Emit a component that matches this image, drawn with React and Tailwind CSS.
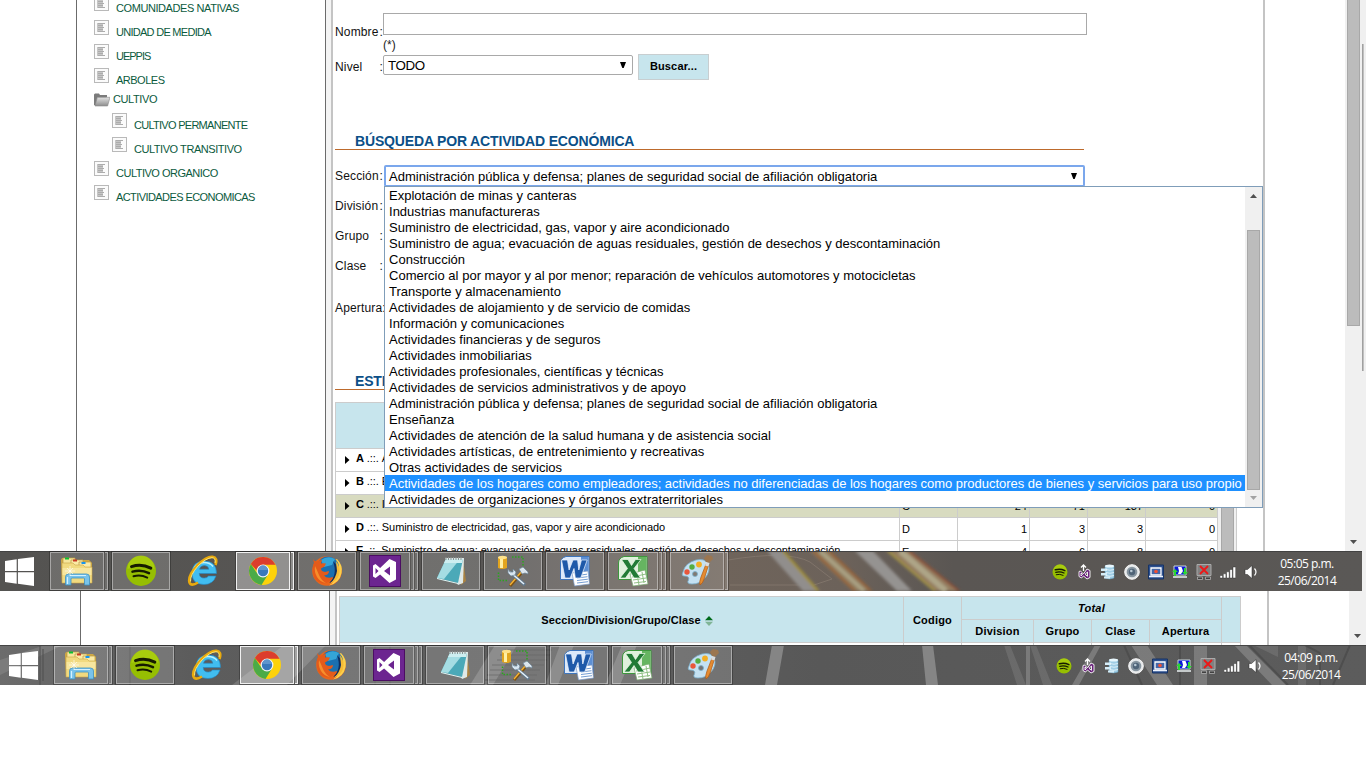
import React from "react";

const SIDEBAR_TOP = [
  ["COMUNIDADES NATIVAS", "tracking-[-0.42px]"],
  ["UNIDAD DE MEDIDA", "tracking-[-0.72px]"],
  ["UEPPIS", "tracking-[-1px]"],
  ["ARBOLES", "tracking-[-0.5px]"],
];
const SIDEBAR_CHILDREN = [
  ["CULTIVO PERMANENTE", "tracking-[-0.72px]"],
  ["CULTIVO TRANSITIVO", "tracking-[-0.45px]"],
];
const SIDEBAR_BOTTOM = [
  ["CULTIVO ORGANICO", "tracking-[-0.5px]"],
  ["ACTIVIDADES ECONOMICAS", "tracking-[-0.58px]"],
];

const OPTIONS = [
  "Explotación de minas y canteras",
  "Industrias manufactureras",
  "Suministro de electricidad, gas, vapor y aire acondicionado",
  "Suministro de agua; evacuación de aguas residuales, gestión de desechos y descontaminación",
  "Construcción",
  "Comercio al por mayor y al por menor; reparación de vehículos automotores y motocicletas",
  "Transporte y almacenamiento",
  "Actividades de alojamiento y de servicio de comidas",
  "Información y comunicaciones",
  "Actividades financieras y de seguros",
  "Actividades inmobiliarias",
  "Actividades profesionales, científicas y técnicas",
  "Actividades de servicios administrativos y de apoyo",
  "Administración pública y defensa; planes de seguridad social de afiliación obligatoria",
  "Enseñanza",
  "Actividades de atención de la salud humana y de asistencia social",
  "Actividades artísticas, de entretenimiento y recreativas",
  "Otras actividades de servicios",
  "Actividades de los hogares como empleadores; actividades no diferenciadas de los hogares como productores de bienes y servicios para uso propio",
  "Actividades de organizaciones y órganos extraterritoriales",
];

const ROWS = [
  { k: "A", name: "Agricultura, ganadería", v: ["3", "13", "38", "0"] },
  { k: "B", name: "Explotación de minas", v: ["5", "10", "14", "0"] },
  { k: "C", name: "Industrias manufactureras", v: ["24", "71", "137", "0"] },
  { k: "D", name: "Suministro de electricidad, gas, vapor y aire acondicionado", v: ["1", "3", "3", "0"] },
  { k: "E", name: "Suministro de agua; evacuación de aguas residuales, gestión de desechos y descontaminación", v: ["4", "6", "8", "0"] },
];

function DocIcon() {
  return (
    <svg className="mt-[3px] h-[15px] w-[15px] shrink-0" viewBox="0 0 15 15">
      <rect x="0.5" y="0.5" width="14" height="14" fill="#fbfbfb" stroke="#b9b9b9" />
      <rect x="3" y="3" width="6" height="9" fill="#c6c6c6" />
      <path d="M4 3.500h7M4 5.500h5M4 7.500h6M4 9.500h5M4 11.500h7" stroke="#acacac" strokeWidth="1" />
    </svg>
  );
}

function TreeItem({ label, track, nested }) {
  return (
    <div className={nested ? "flex h-6 pl-[35px]" : "flex h-6 pl-[17px]"}>
      <DocIcon />
      <span className={`ml-[7px] pt-[7px] text-[11px] leading-4 whitespace-nowrap text-[#0b5a3d] ${track}`}>{label}</span>
    </div>
  );
}

function Sidebar() {
  return (
    <div className="-mt-[7px] w-[250px] shrink-0 border-x border-[#6b6b6b]">
      {SIDEBAR_TOP.map(([l, t]) => <TreeItem key={l} label={l} track={t} />)}
      <div className="flex h-[21px] items-center pl-[17px]">
        <svg className="h-[14px] w-[16px]" viewBox="0 0 16 14">
          <defs>
            <linearGradient id="fold" x1="0" y1="0" x2="0" y2="1">
              <stop offset="0" stopColor="#e2e2e2" />
              <stop offset="1" stopColor="#8d8d8d" />
            </linearGradient>
          </defs>
          <path d="M0 12V1.500L1 .5h4l1 1.500h7v2L3 13z" fill="#7b7b7b" />
          <path d="M1 13L3.300 4.300H16L13.600 13z" fill="url(#fold)" stroke="#8a8a8a" strokeWidth=".6" />
        </svg>
        <span className="-mt-[2px] ml-[3px] text-[11px] leading-4 tracking-[-0.4px] text-[#0b5a3d]">CULTIVO</span>
      </div>
      {SIDEBAR_CHILDREN.map(([l, t]) => <TreeItem key={l} label={l} track={t} nested />)}
      {SIDEBAR_BOTTOM.map(([l, t]) => <TreeItem key={l} label={l} track={t} />)}
    </div>
  );
}

function Label({ children }) {
  return (
    <div className="flex h-4 w-[48px] shrink-0 justify-between text-[12px] leading-4 tracking-[0.15px] whitespace-nowrap text-[#111]">
      <span>{children}</span>
      <span>:</span>
    </div>
  );
}

function DownArrow() {
  return (
    <svg className="mr-px h-[6px] w-[6px] shrink-0" viewBox="0 0 6 6">
      <path d="M0 0h6L3.700 6H2.300z" fill="#000" />
    </svg>
  );
}

function Heading({ children }) {
  return (
    <div className="h-[17px] w-[749px] border-b border-[#bd6a2c] pl-[20px] text-[14px] leading-4 font-bold tracking-[-0.16px] whitespace-nowrap text-[#0b4f87]">
      {children}
    </div>
  );
}

function Dropdown() {
  return (
    <div className="absolute top-[186px] left-[384px] z-10 flex h-[322px] w-[879px] border border-[#7f9db9] bg-white">
      <div className="w-[860px] shrink-0">
        {OPTIONS.map((o, i) => (
          <div
            key={o}
            className={
              i === 18
                ? "h-4 bg-[#1e90ff] pl-1 text-[13px] leading-[17px] tracking-[-0.02px] whitespace-nowrap text-white"
                : "h-4 pl-1 text-[13px] leading-[17px] tracking-[0.015px] whitespace-nowrap text-black"
            }
          >
            {o}
          </div>
        ))}
      </div>
      <div className="flex w-[17px] shrink-0 flex-col items-center bg-[#f0f0f0]">
        <svg className="mt-[7px] h-1 w-[7px]" viewBox="0 0 7 4"><path d="M3.500 0L7 4H0z" fill="#505050" /></svg>
        <div className="mt-8 h-[260px] w-[13px] border border-[#a8a8a8] bg-[#bcbcbc]" />
        <svg className="mt-[6px] h-1 w-[7px]" viewBox="0 0 7 4"><path d="M3.500 4L7 0H0z" fill="#a3a3a3" /></svg>
      </div>
    </div>
  );
}

function TopTable() {
  return (
    <div className="flex h-[149px] w-[902px] border-t border-l border-[#ccc]">
      <div className="w-[882px]">
        <div className="h-[46px] border-b border-[#ccc] bg-[#c7e5ed]" />
        {ROWS.map((r) => (
          <div
            key={r.k}
            className={
              r.k === "C"
                ? "flex h-[23px] border-b border-[#ccc] bg-[#d8dbc0] text-[11px] leading-[22px] text-black"
                : "flex h-[23px] border-b border-[#ccc] bg-white text-[11px] leading-[22px] text-black"
            }
          >
            <div className="flex w-[564px] items-center border-r border-[#ccc] pl-[9px]">
              <svg className="h-2 w-[5px]" viewBox="0 0 5 8"><path d="M0 0l4.500 4L0 8z" /></svg>
              <span className="-mt-[4px] ml-[6px] tracking-[-0.07px] whitespace-nowrap"><b>{r.k}</b> .::.</span>
              <span className="-mt-[4px] ml-[3px] tracking-[-0.07px] whitespace-nowrap">{r.name}</span>
            </div>
            <div className="w-[58px] border-r border-[#ccc] pl-[2px]">{r.k}</div>
            <div className="w-[72px] border-r border-[#ccc] pr-[2px] text-right">{r.v[0]}</div>
            <div className="w-[58px] border-r border-[#ccc] pr-[2px] text-right">{r.v[1]}</div>
            <div className="w-[58px] border-r border-[#ccc] pr-[2px] text-right">{r.v[2]}</div>
            <div className="w-[72px] border-r border-[#ccc] pr-[2px] text-right">{r.v[3]}</div>
          </div>
        ))}
      </div>
      <div className="flex w-[19px] border-r border-[#ccc] bg-[#f0f0f0] pl-[3px]">
        <div className="mt-[46px] h-[102px] w-[13px] border-x border-[#a8a8a8] bg-[#bcbcbc]" />
      </div>
    </div>
  );
}

function TopWindow() {
  return (
    <div className="relative flex h-[551px] overflow-hidden bg-white pl-[76px]">
      <Sidebar />
      <div className="w-[5px] shrink-0 bg-[#f4f4f4]" />
      <div className="w-[934px] shrink-0 border-x-2 border-[#c4c4c4] pl-[2px]">
        <div className="flex h-[50px] pt-[13px]">
          <div className="pt-[11px]"><Label>Nombre</Label></div>
          <div>
            <div className="h-[22px] w-[704px] border border-[#a9a9a9] bg-white" />
            <div className="pt-[2px] text-[12px] leading-4 text-[#222]">(*)</div>
          </div>
        </div>
        <div className="flex h-[83px] pt-1">
          <div className="pt-[5px]"><Label>Nivel</Label></div>
          <div className="mt-px flex h-[20px] w-[250px] items-center justify-between rounded-[2px] border border-[#a9a9a9] pr-[5px] pl-1 text-[13.33px] tracking-[-0.4px]">
            <span className="pt-px">TODO</span>
            <DownArrow />
          </div>
          <div className="ml-[5px] h-[26px] w-[71px] border border-[#c8ced0] bg-[#c7e5ed] text-center text-[11px] leading-[23px] font-bold tracking-[0.15px]">Buscar...</div>
        </div>
        <Heading>BÚSQUEDA POR ACTIVIDAD ECONÓMICA</Heading>
        <div className="flex h-[48px] pt-[15px]">
          <div className="w-[49px] pt-[3px]"><Label>Sección</Label></div>
          <div className="flex h-[22px] w-[701px] items-center justify-between rounded-[2px] border-2 border-[#7ba7ec] pr-[5px] pl-[3px] text-[13px] tracking-[0.015px] whitespace-nowrap">
            <span className="pt-px">{OPTIONS[13]}</span>
            <DownArrow />
          </div>
        </div>
        <div className="flex h-[102px] flex-col gap-[14px]">
          <Label>División</Label>
          <Label>Grupo</Label>
          <Label>Clase</Label>
        </div>
        <div className="h-[73px]"><Label>Apertura</Label></div>
        <Heading>ESTRUCTURA</Heading>
        <div className="mt-3"><TopTable /></div>
      </div>
      <Dropdown />
      <div className="ml-20 flex w-[21px] bg-[#f0f0f0] pl-[2px]">
        <div className="flex w-[13px] flex-col items-center justify-between">
          <div className="h-[326px] w-[13px] border-x border-b border-[#a8a8a8] bg-[#bcbcbc]" />
          <svg className="mb-[7px] h-1 w-[7px]" viewBox="0 0 7 4"><path d="M3.500 4L7 0H0z" fill="#505050" /></svg>
        </div>
        <div className="mt-11 ml-[2px] h-[327px] w-[2px] border-l border-[#a0a0a0] bg-[#c0c0c0]" />
      </div>
    </div>
  );
}

function HeadCell({ children, wide }) {
  return (
    <div className={wide ? "w-[72px] border-r border-[#ccc] text-center" : "w-[58px] border-r border-[#ccc] text-center"}>{children}</div>
  );
}

function MiddleWindow() {
  return (
    <div className="flex h-[54px] overflow-hidden bg-white pl-20">
      <div className="w-[250px] border-x border-[#6b6b6b]" />
      <div className="w-[5px] bg-[#f4f4f4]" />
      <div className="w-[934px] border-x-2 border-[#c4c4c4] pt-[5px] pl-[2px]">
        <div className="flex h-[47px] w-[902px] border border-[#ccc] bg-[#c7e5ed] text-[11px] font-bold tracking-[0.2px] text-black">
          <div className="flex w-[564px] items-center justify-center border-r border-[#ccc] pt-[2px] pl-[11px] tracking-[0.1px]">
            <span>Seccion/Division/Grupo/Clase</span>
            <svg className="ml-1 h-[10px] w-2" viewBox="0 0 8 10">
              <path d="M4 0l4 4.300H0z" fill="#006b1b" />
              <path d="M4 10l4-4.300H0z" fill="#7fb496" />
            </svg>
          </div>
          <div className="flex w-[58px] items-center justify-center border-r border-[#ccc] pt-[2px]">Codigo</div>
          <div className="w-[260px]">
            <div className="h-[23px] border-r border-b border-[#ccc] text-center leading-[22px] italic">Total</div>
            <div className="flex h-[22px] leading-[23px]">
              <HeadCell wide>Division</HeadCell>
              <HeadCell>Grupo</HeadCell>
              <HeadCell>Clase</HeadCell>
              <HeadCell wide>Apertura</HeadCell>
            </div>
          </div>
        </div>
        <div className="flex h-[2px] w-[902px] border-x border-[#ccc]">
          <div className="w-[564px] border-r border-[#ccc]" />
          <div className="w-[58px] border-r border-[#ccc]" />
          <HeadCell wide />
          <HeadCell />
          <HeadCell />
          <HeadCell wide />
        </div>
      </div>
      <div className="ml-20 flex w-[17px] flex-col items-center justify-end bg-[#f0f0f0] pb-[7px]">
        <svg className="h-1 w-[7px]" viewBox="0 0 7 4"><path d="M3.500 4L7 0H0z" fill="#505050" /></svg>
      </div>
    </div>
  );
}

const I = "h-8 w-8 shrink-0";

function ExplorerIcon() {
  return (
    <svg className={I} viewBox="0 0 32 32">
      <path d="M0 5l1-2h9l2 2h16l3 3v20H1z" fill="#d0a945" />
      <path d="M2 3h12v6H2z" fill="#f6e69c" stroke="#b9983f" strokeWidth=".7" />
      <path d="M10 5h12v6H10z" fill="#fbeba6" stroke="#b9983f" strokeWidth=".7" />
      <path d="M18 7h12v6H18z" fill="#fbeba6" stroke="#b9983f" strokeWidth=".7" />
      <rect x="4" y="2.500" width="4" height="2" fill="#0bbf32" />
      <rect x="12" y="4.500" width="4" height="2" fill="#c93a24" />
      <rect x="20.500" y="7" width="4" height="2" fill="#1795ee" />
      <path d="M1 8h11l2 2h8l2 2h7v16H1z" fill="#f1da80" stroke="#c9a548" strokeWidth=".6" />
      <path d="M1.500 13h29v7h-29z" fill="#fbeeb4" opacity=".6" />
      <path d="M4.500 30V22q0-3 3-3h18q3 0 3 3v8h-5v-6q0-1-1-1H11q-1 0-1 1v6z" fill="#79c3ea" stroke="#3d8fc0" strokeWidth=".8" />
      <path d="M6.500 29v-7M9 20.500h16" stroke="#d3f1ff" strokeWidth="1.200" />
      <path d="M9 11v10M4 16h10M6 13l6 6M12 13l-6 6" stroke="#fff" strokeWidth=".6" />
    </svg>
  );
}

function SpotifyShape() {
  return (
    <>
      <circle cx="16" cy="16" r="15" fill="#96be02" />
      <path d="M2.500 14a13.500 13.500 0 0 1 27 0q-13-6-27 0z" fill="#b2d414" opacity=".65" />
      <g fill="none" stroke="#161b00" strokeLinecap="round">
        <path d="M6.500 11.600q10-3.200 19.300 1.500" strokeWidth="3" />
        <path d="M7.500 16.600q8.600-2.500 16.500 1.500" strokeWidth="2.500" />
        <path d="M8.500 21.300q7.200-2 13.700 1.300" strokeWidth="2" />
      </g>
    </>
  );
}

function SpotifyIcon() {
  return <svg className={I} viewBox="0 0 32 32"><SpotifyShape /></svg>;
}

function IeIcon() {
  return (
    <svg className={I} viewBox="0 0 32 32">
      <path d="M29.500 18.500H12.200q.4 4.600 5 4.600 3 0 4.300-2.100h7.500q-2.800 8.500-12 8.500Q5 29.500 5 18T17 6q12.500 0 12.500 12.500zM12.500 14.200h9.300q-.5-3.600-4.500-3.600-4 0-4.800 3.600z" fill="#41bdf0" stroke="#2187c4" strokeWidth=".6" />
      <path d="M6.500 16q1.500-8.500 10.500-8.500 6 0 9 4" fill="none" stroke="#b9f1ff" strokeWidth="1.400" />
      <path d="M28.500 10q2.500-7.500-3-8.300Q19.500 1.200 10 10.500 .5 21 2.500 27.500 4 31.800 11 27.500" fill="none" stroke="#e9aa0d" strokeWidth="2.600" />
      <path d="M28 8q1-5-3-5.300Q19 3 11 11 3 20 3.500 26.500" fill="none" stroke="#ffe873" strokeWidth="1" />
    </svg>
  );
}

function ChromeIcon() {
  return (
    <svg className={I} viewBox="0 0 32 32">
      <circle cx="16" cy="16" r="14" fill="#fdd20a" />
      <path d="M3.870 9A14 14 0 0 0 14.500 29.900l6.200-9.800L16 16 9.500 17.500z" fill="#4bab47" />
      <path d="M3.870 9A14 14 0 0 1 28.500 9.700L16 9.700 10 16z" fill="#dc3d2d" />
      <circle cx="16" cy="16" r="6.400" fill="#f4f4f4" />
      <circle cx="16" cy="16" r="5.200" fill="#3978bb" />
      <path d="M11.300 15a4.700 4.700 0 0 1 9.400 0z" fill="#5f95cd" />
    </svg>
  );
}

function FirefoxIcon() {
  return (
    <svg className={I} viewBox="0 0 32 32">
      <circle cx="16" cy="16" r="14.800" fill="#e8661c" />
      <path d="M26 4q6 6 4.600 14-2 10-12.600 12.600 8-5 8.500-13Q27 10 22 6z" fill="#fbd04c" />
      <circle cx="17" cy="12.500" r="11" fill="#1b70b0" />
      <path d="M10 5q7-5 14-1l-3 6-8 2z" fill="#34a5d8" />
      <path d="M22 6q7 6 4 15-2 5-8 7 9-8 4-22z" fill="#102f61" />
      <path d="M25 6q5 6 3 14-2 6-9 9 6-6 7-13z" fill="#f7bb35" />
      <path d="M2 4q2 3 4.500 2.500L11 4.500 10 8.500q2-.5 5 0l-1.500 3-3.500 2q0 3 4 3.500l4-1q0 4-5 4.500 3 3.500 9 1.500-3 6-10 6.500Q3 27 2 18 1 11 3 8z" fill="#e45b1a" />
      <path d="M4 11q-1 6 2 11t9 6q-5-3-7-8T4 11z" fill="#f68e2c" />
    </svg>
  );
}

function VsIcon() {
  return (
    <svg className={I} viewBox="0 0 32 32">
      <rect x=".5" y=".5" width="31" height="31" fill="#6c2590" stroke="#4b0d62" />
      <path fillRule="evenodd" d="M20.500 4L27 7v17.500L20.500 28l-9.400-8.500L6.500 23 4 21.500v-11L6.500 9l4.600 4zM6.500 13v6l3-3zM21 11.500L15 16l6 4.500z" fill="#fff" />
    </svg>
  );
}

function NotepadIcon() {
  return (
    <svg className={I} viewBox="0 0 32 32">
      <path d="M28 4l3 22-5 4z" fill="#a98242" />
      <path d="M10 3h19l-1 25-5 2z" fill="#dfe9e8" />
      <path d="M11 4h17l-5 24-21-5z" fill="#4ba9b8" />
      <path d="M11 4h14L9 24l-7-1z" fill="#a5dde3" />
      <path d="M11 4h17l-1 4H9z" fill="#cdeef0" />
      <path d="M2 23.500L23 28.500" stroke="#def5f5" />
      <path d="M11 2v3M13.500 2v3M16 2v3M18.500 2v3M21 2v3M23.500 2v3M26 2v3" stroke="#8b9493" strokeWidth="1" />
    </svg>
  );
}

function ToolsIcon() {
  return (
    <svg className={I} viewBox="0 0 32 32">
      <path d="M1 2h9v11q-4.500 2-9 0z" fill="#e2a51e" />
      <path d="M3 2h3v11H3z" fill="#fff0a4" />
      <ellipse cx="5.500" cy="2.500" rx="4.500" ry="1.700" fill="#ffe28a" />
      <path d="M15 2h11v11M1.500 17.500v8h10" fill="none" stroke="#2ba51f" strokeWidth="1.500" strokeDasharray="1.500 1.500" />
      <path d="M13 31l13-15" stroke="#7b5114" strokeWidth="3" />
      <path d="M13 30l12-14" stroke="#f6b333" strokeWidth="1.400" />
      <path d="M13 17l15 13" stroke="#627b91" strokeWidth="3" />
      <path d="M13 17l14 12" stroke="#e8f2fa" strokeWidth="1.500" />
      <path d="M11 14v4l3 3 4-1 1-3-3-3v3h-3z" fill="#d7e5f0" stroke="#6d8497" strokeWidth=".7" />
      <path d="M22 14l4-2 5 5v2l-3-1-3 1z" fill="#dce6ee" stroke="#6d8497" strokeWidth=".7" />
    </svg>
  );
}

function WordIcon() {
  return (
    <svg className={I} viewBox="0 0 32 32">
      <path d="M7 1.500h23v23H1.500V8q0-5 5.500-6.500z" fill="#dce9fa" stroke="#3e75bc" />
      <path d="M22 2h7.500v22H22z" fill="#5c8fd4" />
      <path d="M13 18l16-2 1.500 13-15 2z" fill="#fff" stroke="#7a9ac7" strokeWidth=".7" />
      <path d="M18 20.500l10-1.300M18 23l10.500-1.300M18 25.500l10.800-1.300M18 28l11-1.300" stroke="#749dd3" />
      <path d="M2.500 5h6l1.600 10L14 5h4.600l1.200 10 2.700-10h5.700l-6.500 18h-5.400L15 13.500 11.200 23H6z" fill="#1e59a9" stroke="#eef5ff" strokeWidth=".7" />
    </svg>
  );
}

function ExcelIcon() {
  return (
    <svg className={I} viewBox="0 0 32 32">
      <path d="M7 1.500h23v23H1.500V8q0-5 5.500-6.500z" fill="#dff1dc" stroke="#3d963d" />
      <path d="M21 2h8.500v22H21z" fill="#66b561" />
      <path d="M13 19l15-4 3 14-15 2z" fill="#fff" stroke="#78ab6e" strokeWidth=".7" />
      <path d="M15 22l14-3M16 25l13-2M17 28l12-1.500M20 19l2 11M25 17l2 11" stroke="#8fc084" />
      <path d="M4.500 4.500h6.500l3.500 6L18.500 4.500h5.500l-7 9L23.500 23H17l-4-6.500L8.500 23H3l7.500-9.500z" fill="#217b35" stroke="#eefaea" strokeWidth=".7" />
    </svg>
  );
}

function PaintIcon() {
  return (
    <svg className={I} viewBox="0 0 32 32">
      <path fillRule="evenodd" d="M2 17Q4 8 15 5q9-2 12 4 3 7-3 14-5 6-13 6-6 0-3.500-4Q9 21 3 21 0 21 2 17zM11.500 19a2.500 2.500 0 1 0 5 0 2.500 2.500 0 0 0-5 0z" fill="#c4e1f2" stroke="#7aaecb" strokeWidth=".8" />
      <circle cx="6" cy="17" r="2.700" fill="#e9573b" />
      <circle cx="11" cy="12" r="2.700" fill="#55ad43" />
      <circle cx="18" cy="9.500" r="2.900" fill="#f3ae24" />
      <path d="M19 30q-1-3 1-8l5-13 2.500 1-4 13q-2 6-4.500 7z" fill="#e48b31" stroke="#ad5914" strokeWidth=".7" />
      <path d="M25 7l-2-4 3-3 5 1 1 3-4 4z" fill="#9b7650" />
      <path d="M25 7l3.500 1-1 3.500-3.500-1z" fill="#d9dde0" />
    </svg>
  );
}

function TaskButton({ stack = 0, active, flat, children }) {
  if (flat) return <div className="flex w-[58px] items-center justify-center pb-px">{children}</div>;
  const edge = active ? "border-[#f0f0f0]" : "border-white/40";
  const fill = active ? "bg-white/35" : "bg-white/15";
  return (
    <div className="flex w-[58px] outline outline-1 outline-black/25">
      <div className={`flex min-w-0 flex-1 items-center justify-center border ${edge} ${fill}`}>{children}</div>
      {stack > 0 && <div className={`ml-px w-[3px] border-y border-r ${edge} ${fill}`} />}
      {stack > 1 && <div className={`ml-px w-[3px] border-y border-r ${edge} ${fill}`} />}
    </div>
  );
}

function Tray() {
  const c = "h-4 w-4";
  return (
    <div className="flex items-center gap-2 pt-[2px]">
      <svg className={c} viewBox="0 0 32 32"><SpotifyShape /></svg>
      <svg className={c} viewBox="0 0 16 16">
        <path fillRule="evenodd" d="M11 5l3 1.500v7L11 15l-3.500-3-2 2L3 12.500v-5L4.500 7l3 3zM5 9v3l1.500-1.500zM11.500 8L9 10.300l2.500 2z" fill="#68217a" stroke="#fff" strokeWidth=".9" />
        <path d="M7.500 7V1M5 3.500L7.500 1 10 3.500" fill="none" stroke="#fff" strokeWidth="1.300" />
      </svg>
      <svg className={c} viewBox="0 0 16 16">
        <path d="M5 2v12q4.500 2 9 0V2z" fill="#9fcde5" stroke="#5e98b7" strokeWidth=".5" />
        <path d="M1 4.500h6v2.500H1zM1 9h6v2.500H1zM4 12.500h6v2H4z" fill="#d5edf8" />
        <ellipse cx="9.500" cy="2" rx="4.500" ry="1.500" fill="#e8f7fd" />
        <path d="M6 5.500q4 1.500 8 0M6 8.500q4 1.500 8 0M6 11.500q4 1.500 8 0" stroke="#eaf7fd" fill="none" strokeWidth=".8" />
      </svg>
      <svg className={c} viewBox="0 0 16 16">
        <circle cx="8" cy="8" r="7.300" fill="#e5e8ea" stroke="#f8f8f8" />
        <circle cx="8" cy="8" r="5.300" fill="#8795a0" />
        <circle cx="8" cy="8" r="3.200" fill="#4f6478" />
        <circle cx="7.300" cy="7" r="1.300" fill="#b8c8d4" />
      </svg>
      <svg className={c} viewBox="0 0 16 16">
        <path d="M.5 1h15v14H.5z" fill="#2d5190" stroke="#163365" />
        <path d="M3 4h10v7H3z" fill="#4367a9" stroke="#fff" strokeWidth="1.300" />
        <path d="M1 12.500h14" stroke="#edf3ff" strokeWidth="1.500" />
        <circle cx="8" cy="7.500" r="1.800" fill="#f24f32" />
      </svg>
      <svg className={c} viewBox="0 0 16 16">
        <path d="M2 2h12v9H2z" fill="#0b18d8" stroke="#c8d4d8" />
        <path d="M6 3h3.500l1.500 4-2 3H6l1-3z" fill="#fff" />
        <path d="M1 12h14v2H1z" fill="#c5cacb" />
        <path d="M0 8l3-3 3 3H4v4H2V8zM16 8l-3 3-3-3h2V4h2v4z" fill="#2bd633" />
      </svg>
      <svg className={c} viewBox="0 0 16 16">
        <path d="M1 .5h14v11H1z" fill="#818181" stroke="#aaa" />
        <path d="M4 2l8 8M12 2l-8 8" stroke="#ee1717" strokeWidth="1.800" />
        <path d="M1.500 13h5v2.500h-5zM9.500 13h5v2.500h-5z" fill="#404040" stroke="#bdbdbd" strokeWidth=".7" />
      </svg>
      <svg className={c} viewBox="0 0 16 16">
        <path d="M0 11.500h2.600v2.500H0zM3.300 9.800h2.600V14H3.300zM6.500 7.800h2.700V14H6.500zM9.800 5.500h2.600V14H9.800zM13 3h2.700v11H13z" fill="#fff" stroke="#222" strokeWidth=".4" />
      </svg>
      <svg className={c} viewBox="0 0 16 16">
        <path d="M1 5.500h2.500L8 1.500v13l-4.500-4H1z" fill="#fff" stroke="#222" strokeWidth=".5" />
        <path d="M10.500 4.500q3 3.500 0 7" fill="none" stroke="#fff" strokeWidth="1.200" />
      </svg>
    </div>
  );
}

function Buttons({ paintStack }) {
  return (
    <div className="flex h-[38px] gap-1 self-center">
      <TaskButton stack={1}><ExplorerIcon /></TaskButton>
      <TaskButton><SpotifyIcon /></TaskButton>
      <TaskButton flat><IeIcon /></TaskButton>
      <TaskButton stack={1} active><ChromeIcon /></TaskButton>
      <TaskButton><FirefoxIcon /></TaskButton>
      <TaskButton stack={2}><VsIcon /></TaskButton>
      <TaskButton><NotepadIcon /></TaskButton>
      <TaskButton><ToolsIcon /></TaskButton>
      <TaskButton><WordIcon /></TaskButton>
      <TaskButton stack={2}><ExcelIcon /></TaskButton>
      <TaskButton stack={paintStack}><PaintIcon /></TaskButton>
    </div>
  );
}

function StreakBackdrop() {
  return (
    <svg className="absolute inset-0 h-full w-full" viewBox="0 0 1362 40" preserveAspectRatio="none">
      <defs>
        <linearGradient id="warm" x1="0" x2="1" y1="0" y2="0">
          <stop offset="0" stopColor="#545351" />
          <stop offset=".38" stopColor="#595755" />
          <stop offset=".53" stopColor="#6f645b" />
          <stop offset=".62" stopColor="#6c625a" />
          <stop offset=".7" stopColor="#5a5653" />
          <stop offset="1" stopColor="#5a5856" />
        </linearGradient>
        <filter id="soft"><feGaussianBlur stdDeviation="1.500" /></filter>
      </defs>
      <rect width="1362" height="40" fill="url(#warm)" />
      <path d="M728 9q60-10 82 2l22 17-18 6h-84" fill="none" stroke="#80746a" />
      <g filter="url(#soft)">
        <path d="M767 0h17l36 40h-17z" fill="#918e8c" />
        <path d="M783 0l35 40" stroke="#a08e2c" strokeWidth="2.500" />
        <path d="M810 0h20l42 40h-19z" fill="#8f7c5f" />
        <path d="M813 0l42 40M829 0l42 40" stroke="#995f30" strokeWidth="2" />
        <path d="M820 0l44 40" stroke="#aaa183" strokeWidth="4" />
        <path d="M855 0h18l39 40h-15z" fill="#959391" />
        <path d="M886 0h25l49 40h-27z" fill="#947b5f" />
        <path d="M888 0l47 40" stroke="#a0933f" strokeWidth="2" />
        <path d="M909 0l50 40" stroke="#8a4a31" strokeWidth="2" />
        <path d="M900 0l46 40" stroke="#aea688" strokeWidth="6" />
      </g>
      <path d="M0 .5h1362" stroke="#424242" />
    </svg>
  );
}

function GirderBackdrop() {
  return (
    <svg className="absolute inset-0 h-full w-full" viewBox="0 0 1366 40" preserveAspectRatio="none">
      <defs>
        <linearGradient id="steel" x1="0" x2="1" y1="0" y2="0">
          <stop offset="0" stopColor="#6c6c6c" />
          <stop offset=".14" stopColor="#5c5c5c" />
          <stop offset=".4" stopColor="#606060" />
          <stop offset=".6" stopColor="#585858" />
          <stop offset="1" stopColor="#5c5c5c" />
        </linearGradient>
      </defs>
      <rect width="1366" height="40" fill="url(#steel)" />
      <g fill="#858585">
        <path d="M0 15L45 0h18L0 30zM232 40l52-40h42l-39 40z" opacity=".6" />
        <path d="M470 40l25-40h22l-24 40zM545 40l15-40h14l-16 40zM605 40l17-40h15l-17 40z" opacity=".7" />
        <path d="M772 0h12l-7 40h-12zM922 0h11l5 40h-12z" />
        <path d="M1026 0h4v40h-4zM1131 0h16l26 40h-16zM1194 0h13v40h-13zM1234 0h12l40 40h-14zM1095 0h6l-22 40h-7z" opacity=".75" />
        <path d="M1004 0h6l16 40h-9zM1030 0h6l16 40h-9zM1253 0h25v12zM1298 0h8v40h-8z" opacity=".4" />
      </g>
      <g stroke="#4e4e4e" fill="none">
        <path d="M40 0v40M43 4v32M115 0v40M130 0v40" />
        <path d="M375 0v40M390 0v40M505 5h47M500 10h50M497 15h50M492 20h52M490 25h50M487 30h50M485 35h50" opacity=".7" />
        <path d="M1124 0l18 40M1180 0v40M1249 0l39 40M1320 40V8l-15-8M1350 0l-17 40" strokeWidth="2" />
      </g>
      <path d="M0 .5h1366" stroke="#454545" />
    </svg>
  );
}

function Taskbar({ time, second }) {
  return (
    <div className={second ? "relative h-10 w-[1366px] overflow-hidden" : "relative h-10 w-[1362px] overflow-hidden"}>
      {second ? <GirderBackdrop /> : <StreakBackdrop />}
      <div className={second ? "relative flex h-10 w-[1366px] items-center pl-[9px]" : "relative flex h-10 w-[1362px] items-center pl-[5px]"}>
        <svg className="mr-4 h-[29px] w-[29px]" viewBox="0 0 29 29">
          <path d="M0 4l11.700-1.700v11.600H0zM12.900 2.100L29 0v13.900H12.900zM0 15.200h11.700v11.500L0 25zM12.900 15.200H29V29l-16.100-2.300z" fill="#fff" />
        </svg>
        <Buttons paintStack={second ? 0 : 1} />
        <div className="ml-[324px]"><Tray /></div>
        <div className="ml-[17px] flex w-[60px] flex-col items-center pt-[2px] font-['Open_Sans','Noto_Sans',sans-serif] text-[12px] leading-[17px] tracking-[-0.5px] whitespace-nowrap text-white">
          <span>{time}</span>
          <span>25/06/2014</span>
        </div>
      </div>
    </div>
  );
}

export default function App() {
  return (
    <div className="h-[768px] w-[1366px] overflow-hidden bg-white font-['Liberation_Sans',Arial,sans-serif]">
      <TopWindow />
      <div className="bg-[#f0f0f0]"><Taskbar time="05:05 p.m." /></div>
      <MiddleWindow />
      <Taskbar time="04:09 p.m." second />
    </div>
  );
}
